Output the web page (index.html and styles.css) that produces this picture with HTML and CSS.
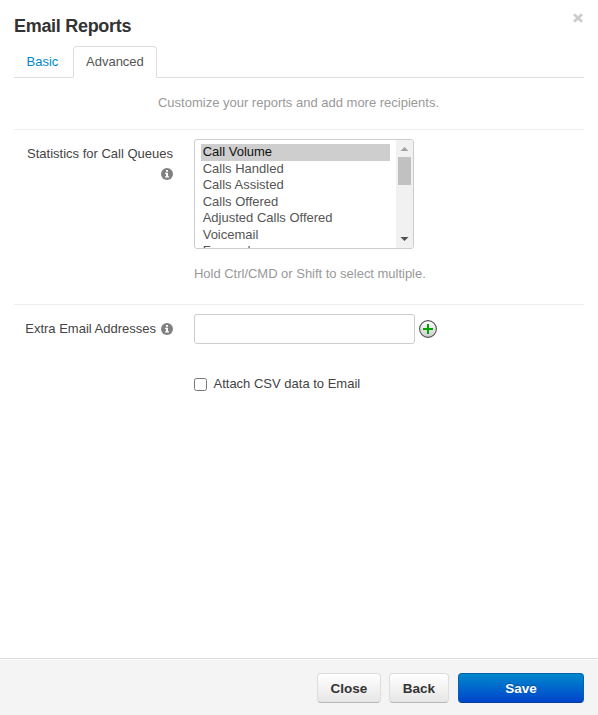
FILE: index.html
```
<!DOCTYPE html>
<html lang="en">
<head>
    <meta charset="UTF-8">
    <meta name="viewport" content="width=device-width, initial-scale=1.0">
    <title>Email Reports</title>
    <link rel="stylesheet" href="styles.css">
</head>
<body>
    <div class="modal">
        <div class="modal-header">
            <h3>Email Reports</h3>
            <button type="button" class="close" aria-label="Close dialog">
                <svg width="10" height="10" viewBox="0 0 10 10"><path d="M2 2.2 8 7.8M8 2.2 2 7.8" stroke="#ccc" stroke-width="2.7" stroke-linecap="square"/></svg>
            </button>
        </div>

        <div class="modal-body">
            <ul class="nav-tabs">
                <li><a href="#basic">Basic</a></li>
                <li class="active"><a href="#advanced">Advanced</a></li>
            </ul>

            <p class="intro">Customize your reports and add more recipients.</p>

            <div class="form-row stats-row">
                <div class="form-label">
                    <span class="label-stats">Statistics for Call Queues</span>
                    <svg class="info" width="12" height="12" viewBox="0 0 12 12"><circle cx="6" cy="6" r="6" fill="#808080"/><path d="M5 2h2v1.7H5zM4.1 4.7H7v3.6h1v1.2H4.1V8.3h1V5.9h-1z" fill="#fff"/></svg>
                </div>
                <div class="controls">
                    <div class="listbox">
                        <ul class="options">
                            <li class="selected">Call Volume</li>
                            <li>Calls Handled</li>
                            <li>Calls Assisted</li>
                            <li>Calls Offered</li>
                            <li>Adjusted Calls Offered</li>
                            <li>Voicemail</li>
                            <li>Forward</li>
                        </ul>
                        <div class="scrollbar">
                            <svg width="9" height="4" viewBox="0 0 9 4"><path d="M4.5 0 8.5 4h-8z" fill="#a3a3a3"/></svg>
                            <div class="thumb"></div>
                            <svg class="down" width="9" height="4" viewBox="0 0 9 4"><path d="M4.5 4 .5 0h8z" fill="#505050"/></svg>
                        </div>
                    </div>
                    <p class="help">Hold Ctrl/CMD or Shift to select multiple.</p>
                </div>
            </div>

            <div class="form-row email-row">
                <div class="form-label inline">
                    <label class="label-email" for="email">Extra Email Addresses</label>
                    <svg class="info" width="12" height="12" viewBox="0 0 12 12"><circle cx="6" cy="6" r="6" fill="#808080"/><path d="M5 2h2v1.7H5zM4.1 4.7H7v3.6h1v1.2H4.1V8.3h1V5.9h-1z" fill="#fff"/></svg>
                </div>
                <div class="controls">
                    <div class="email-field">
                        <input type="text" id="email">
                        <svg class="add" width="18" height="18" viewBox="0 0 18 18">
                            <defs>
                                <linearGradient id="addFill" x1="0" y1="0" x2="0" y2="1">
                                    <stop offset="0" stop-color="#fff"/>
                                    <stop offset="1" stop-color="#ccc"/>
                                </linearGradient>
                            </defs>
                            <circle cx="9" cy="9" r="8.4" fill="url(#addFill)" stroke="#555" stroke-width="1.1"/>
                            <path d="M8 4h2v4h4v2h-4v4H8v-4H4V8h4z" fill="#00a300"/>
                        </svg>
                    </div>
                    <label class="checkbox"><input type="checkbox"><span>Attach CSV data to Email</span></label>
                </div>
            </div>
        </div>

        <div class="modal-footer">
            <button type="button" class="btn btn-close">Close</button>
            <button type="button" class="btn btn-back">Back</button>
            <button type="button" class="btn btn-primary">Save</button>
        </div>
    </div>
</body>
</html>
```
FILE: styles.css
```
* {
    box-sizing: border-box;
}

body {
    margin: 0;
    background: #fff;
    color: #444;
    font-family: "Liberation Sans", Arial, sans-serif;
    font-size: 13px;
    line-height: 20px;
}

ul, p, h3 {
    margin: 0;
    padding: 0;
    list-style: none;
}

svg {
    display: block;
    flex: none;
}

.modal {
    display: flex;
    flex-direction: column;
    height: 715px;
}

/* Header */
.modal-header {
    display: flex;
    justify-content: space-between;
    height: 46px;
    padding: 13px 15px 0 14px;
}

.modal-header h3 {
    font-size: 18px;
    line-height: 26px;
    letter-spacing: -0.3px;
    color: #333;
}

.close {
    height: 10px;
    padding: 0;
    border: 0;
    background: none;
    cursor: pointer;
}

.modal-body {
    flex: 1;
    padding: 0 14px;
}

/* Tabs */
.nav-tabs {
    display: flex;
    height: 32px;
    border-bottom: 1px solid #ddd;
}

.nav-tabs a {
    display: block;
    height: 32px;
    padding: 5px 12px;
    border: 1px solid transparent;
    border-radius: 4px 4px 0 0;
    color: #08c;
    text-decoration: none;
}

.nav-tabs li:first-child {
    width: 59px;
}

.nav-tabs li:first-child a {
    padding-left: 11.5px;
}

.nav-tabs .active {
    width: 84px;
}

.nav-tabs .active a {
    border-color: #ddd;
    border-bottom-color: #fff;
    background: #fff;
    color: #555;
}

.intro {
    height: 51px;
    padding-top: 15px;
    padding-right: 1px;
    text-align: center;
    color: #999;
}

/* Form */
.form-row {
    display: flex;
    gap: 20px;
    border-top: 1px solid #eee;
    padding-top: 9px;
}

.stats-row {
    height: 175px;
}

.form-label {
    display: flex;
    flex-direction: column;
    align-items: flex-end;
    width: 160px;
    padding: 5px 1px 0 0;
    white-space: nowrap;
}

.form-label .info {
    margin-top: 4px;
}

.form-label.inline {
    flex-direction: row;
    justify-content: flex-end;
    align-items: flex-start;
    gap: 5px;
}

.listbox {
    display: flex;
    justify-content: space-between;
    width: 220px;
    height: 110px;
    border: 1px solid #ccc;
    border-radius: 3px;
    overflow: hidden;
}

.options {
    width: 195px;
    padding: 4px 0 0 6px;
    color: #555;
}

.options li {
    height: 16.5px;
    padding-left: 1.7px;
    line-height: 16.5px;
    white-space: nowrap;
}

.options .selected {
    background: #cecece;
    color: #111;
}

.scrollbar {
    display: flex;
    flex-direction: column;
    align-items: center;
    width: 17px;
    padding: 7px 0;
    background: #f1f1f1;
}

.thumb {
    width: 13px;
    height: 28px;
    margin-top: 6px;
    background: #c1c1c1;
}

.scrollbar .down {
    margin-top: auto;
}

.help {
    margin-top: 15px;
    letter-spacing: -0.02px;
    color: #999;
}

.email-field {
    display: flex;
    align-items: center;
    gap: 4px;
}

.email-field input {
    width: 221px;
    height: 30px;
    margin: 0;
    padding: 4px 6px;
    border: 1px solid #ccc;
    border-radius: 3px;
    font: inherit;
    outline: none;
}

.checkbox {
    display: flex;
    align-items: center;
    gap: 6.5px;
    margin-top: 30px;
}

.checkbox input {
    width: 13px;
    height: 13px;
    margin: 1px 0 0;
}

/* Footer */
.modal-footer {
    display: flex;
    justify-content: flex-end;
    height: 57px;
    padding: 14px 14px 0;
    background: #f4f4f4;
    border-top: 1px solid #ddd;
    box-shadow: inset 0 1px 0 #fff;
}

.btn {
    height: 30px;
    padding: 0;
    border: 1px solid #ddd;
    border-bottom-color: #b8b8b8;
    border-radius: 4px;
    background: linear-gradient(#fff, #e6e6e6);
    color: #333;
    font-family: inherit;
    font-size: 13.5px;
    font-weight: bold;
    cursor: pointer;
}

.btn-close {
    width: 64px;
    margin-right: 8px;
}

.btn-back {
    width: 60px;
    margin-right: 9px;
}

.btn-primary {
    width: 126px;
    border-color: #0062b0 #0062b0 #0040a0;
    background: linear-gradient(#08c, #04c);
    color: #fff;
    text-shadow: 0 -1px 0 rgba(0, 0, 0, 0.25);
}
```
